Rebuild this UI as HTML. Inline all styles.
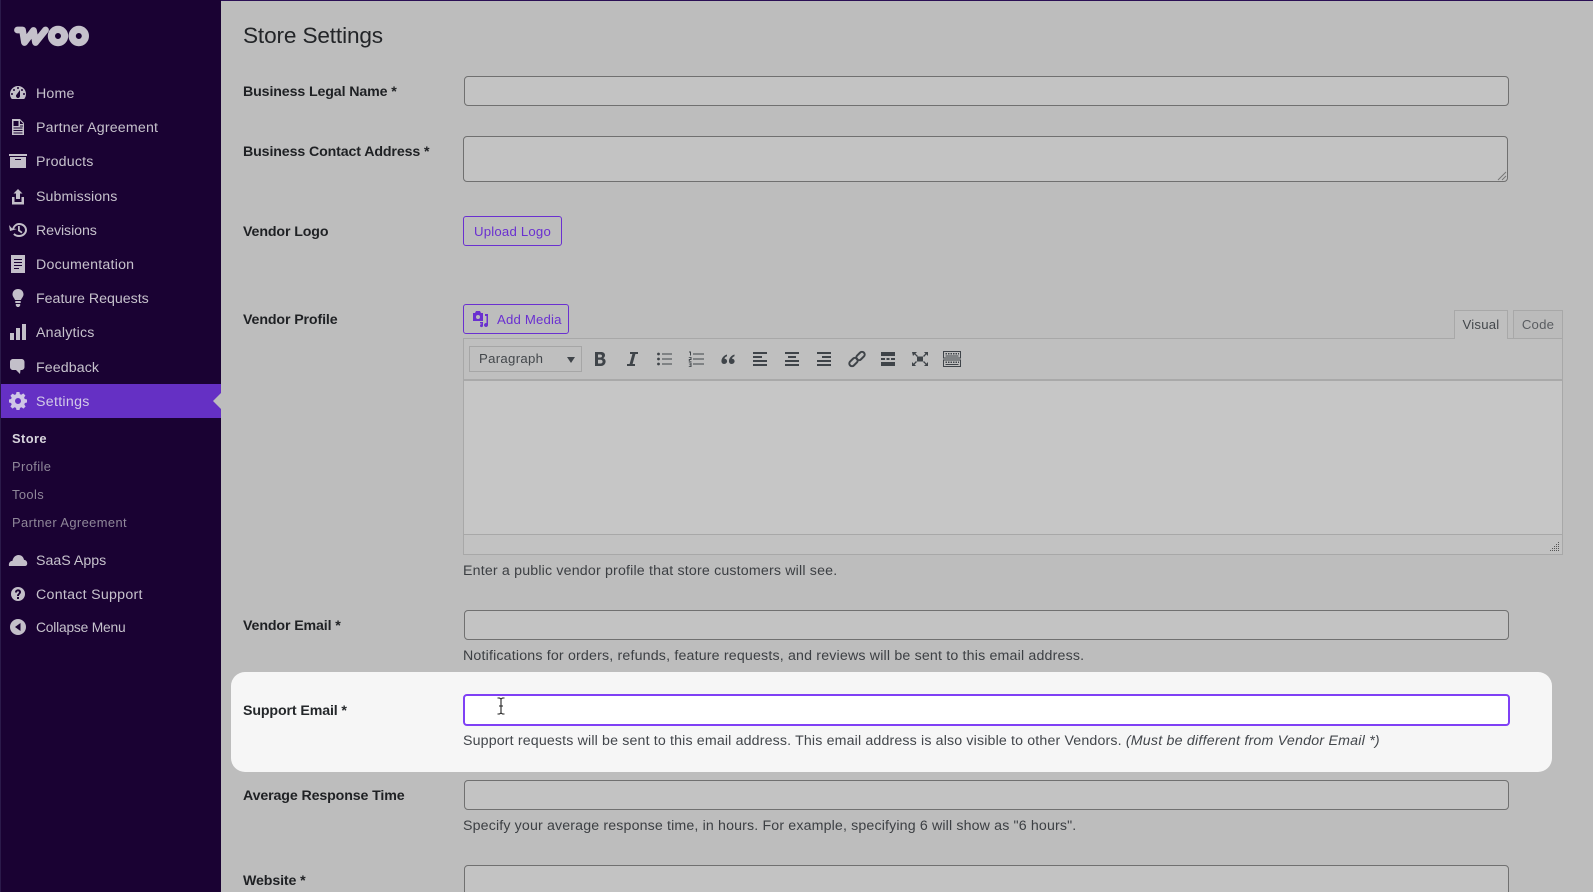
<!DOCTYPE html>
<html lang="en"><head><meta charset="utf-8"><title>Store Settings</title>
<style>
html,body{margin:0;padding:0;width:1593px;height:892px;overflow:hidden;background:#bdbdbd;font-family:"Liberation Sans",Arial,sans-serif}
#root{position:relative;width:1593px;height:892px;overflow:hidden;background:#bdbdbd}
.a{position:absolute;box-sizing:border-box}
.t{position:absolute;white-space:nowrap;line-height:20px;height:20px;margin-top:1px}
#side{left:0;top:0;width:221px;height:892px;background:#1a0233;border-left:1px solid #2b1a4a}
#top{left:221px;top:0;width:1372px;height:1px;background:#2a0f55}
.m{color:#c6c2cc;font-size:14.2px;left:36px}
.s{color:#8f8799;font-size:12.9px;letter-spacing:.4px;left:12px}
.ic{position:absolute;left:8px;width:20px;height:20px;fill:#c3bfc9;fill-rule:evenodd}
.l{color:#1f2124;font-weight:700;font-size:14.2px;letter-spacing:-.12px;left:243px}
.h{color:#3c3f43;font-size:14.2px;letter-spacing:.18px;left:463px}
.i{left:464px;width:1045px;height:30px;background:#c3c3c3;border:1px solid #707070;border-radius:4px}
.b{color:#6a30d0;font-size:13.2px;border:1px solid #6a30d0;border-radius:3px;background:#bdbdbd}
.tb{position:absolute;top:349px;width:20px;height:20px;fill:#3f4449;fill-rule:evenodd}
</style></head><body><div id="root">
<div class="a" id="side"></div><div class="a" id="top"></div>

<svg class="a" style="left:0;top:0" width="100" height="60" viewBox="0 0 100 60"><title>woo</title>
<path d="M17.500 30H22.500L24.500 42.500L33.500 30.500L35.500 42.500L45.500 30" fill="none" stroke="#c5c1cb" stroke-width="6.800" stroke-linejoin="round" stroke-linecap="round"/>
<circle cx="58" cy="36" r="6.600" fill="none" stroke="#c5c1cb" stroke-width="7.200"/><circle cx="78.800" cy="36" r="6.600" fill="none" stroke="#c5c1cb" stroke-width="7.200"/></svg>

<svg class="ic" style="top:83px" viewBox="0 0 20 20"><path d="M3.760 16h12.480c1.100-1.370 1.760-3.110 1.760-5 0-4.420-3.580-8-8-8s-8 3.580-8 8c0 1.890.660 3.630 1.760 5zM10 4c.550 0 1 .450 1 1s-.450 1-1 1-1-.450-1-1 .450-1 1-1zM6 6c.550 0 1 .450 1 1s-.450 1-1 1-1-.450-1-1 .450-1 1-1zm8 0c.550 0 1 .450 1 1s-.450 1-1 1-1-.450-1-1 .450-1 1-1zm-5.370 5.550L12 7v6c0 1.100-.900 2-2 2s-2-.900-2-2c0-.570.240-1.080.630-1.450zM4 10c.550 0 1 .450 1 1s-.450 1-1 1-1-.450-1-1 .450-1 1-1zm12 0c.550 0 1 .450 1 1s-.450 1-1 1-1-.450-1-1 .450-1 1-1z"/></svg>
<div class="t m" style="top:83px;letter-spacing:.17px">Home</div>
<svg class="ic" style="top:117px" viewBox="0 0 20 20"><path d="M4 2h8l4 4v12H4zM5.500 4v5h5V4zM12 3.500V7h3.500zM5.500 10.500v1h9v-1zM5.500 13v1h9v-1zM5.500 15.500v1h9v-1zM12 8.500v1h3v-1z"/></svg>
<div class="t m" style="top:117px;letter-spacing:.18px">Partner Agreement</div>
<svg class="ic" style="top:151px" viewBox="0 0 20 20"><path d="M19 3v2H1V3h18zM2 6h16v11H2V6zm11 3V8H7v1h6z"/></svg>
<div class="t m" style="top:151px;letter-spacing:.2px">Products</div>
<svg class="ic" style="top:186px" viewBox="0 0 20 20"><path d="M10 3l4.500 4.500H12V13H8V7.500H5.500zM4 11h2.500v5h7v-5H16v7.500H4z"/></svg>
<div class="t m" style="top:186px;letter-spacing:.09px">Submissions</div>
<svg class="ic" style="top:220px" viewBox="0 0 20 20"><path d="M1 5l3.200 3.600C5.400 5.400 8 3 11 3c4.400 0 8 3.100 8 7s-3.600 7-8 7c-2.300 0-4.400-.9-5.800-2.400l1.400-1.400C7.700 14.300 9.300 15 11 15c3.300 0 6-2.200 6-5s-2.700-5-6-5c-2.100 0-4 1.400-4.800 3.700L9 9l-7 2zM10 6h1.800v4l2.700 2-1 1.400L10 11z"/></svg>
<div class="t m" style="top:220px;letter-spacing:-.08px">Revisions</div>
<svg class="ic" style="top:254px" viewBox="0 0 20 20"><path d="M3 1h14v18H3zM6 5v1h8V5zM6 8v1h8V8zM6 11v1h8v-1zM6 14v1h5v-1z"/></svg>
<div class="t m" style="top:254px;letter-spacing:.22px">Documentation</div>
<svg class="ic" style="top:288px" viewBox="0 0 20 20"><path d="M10 1c3.200 0 5.500 2.300 5.500 5.300 0 2.400-1.700 3.600-2.500 5.700H7c-.8-2.100-2.500-3.300-2.500-5.700C4.500 3.300 6.800 1 10 1zM7.300 13h5.400v2H7.300zM7.800 16h4.400v1.500L11 19H9l-1.200-1.500z"/></svg>
<div class="t m" style="top:288px;letter-spacing:0">Feature Requests</div>
<svg class="ic" style="top:322px" viewBox="0 0 20 20"><path d="M2 11h4v7H2zM8 6h4v12H8zM14 2h4v16h-4z"/></svg>
<div class="t m" style="top:322px;letter-spacing:.2px">Analytics</div>
<svg class="ic" style="top:357px" viewBox="0 0 20 20"><path d="M5 2h8.500c1.700 0 3 1.300 3 3v5c0 1.700-1.300 3-3 3h-1l-.5 4L8 13H5c-1.700 0-3-1.300-3-3V5c0-1.700 1.300-3 3-3z"/></svg>
<div class="t m" style="top:357px;letter-spacing:.1px">Feedback</div>

<div class="a" style="left:1px;top:384px;width:220px;height:34px;background:#6530c4"></div>
<svg class="a" style="left:213px;top:393px" width="8" height="16"><path d="M8 0L0 8l8 8z" fill="#bdbdbd"/></svg>
<svg class="ic" style="top:391px;fill:#cfc6e6" viewBox="0 0 20 20"><path d="M18 11.500v-3l-2.300-.5-.6-1.500 1.300-2-2.100-2.100-2 1.300-1.500-.6L10.500 1h-3L7 3.300l-1.500.6-2-1.300-2.100 2.100 1.300 2L2.100 8 0 8.500v3l2.100.5.6 1.500-1.300 2 2.100 2.100 2-1.300 1.500.6.5 2.100h3l.5-2.100 1.500-.6 2 1.300 2.100-2.100-1.300-2 .6-1.500zM9 13a3 3 0 1 1 0-6 3 3 0 0 1 0 6z" transform="translate(1 0)"/></svg>
<div class="t m" style="top:391px;color:#d3cbe8;letter-spacing:.3px">Settings</div>

<div class="t s" style="top:428px;color:#d7d4dc;font-weight:700">Store</div>
<div class="t s" style="top:456px">Profile</div>
<div class="t s" style="top:484px">Tools</div>
<div class="t s" style="top:512px">Partner Agreement</div>

<svg class="ic" style="top:550px" viewBox="0 0 20 20"><path d="M1 16c-.6-3 1-5 3.500-5.300C5 7.500 7.500 5 10.500 5c3 0 5 2 5.500 4.700 2.300.3 3.500 2.300 3.200 4.300-.2 1.200-1 2-2.200 2z"/></svg>
<div class="t m" style="top:550px;letter-spacing:0">SaaS Apps</div>
<svg class="ic" style="top:584px" viewBox="0 0 20 20"><path d="M10 3a7 7 0 1 1 0 14 7 7 0 0 1 0-14zM9 13v2h2v-2zM7 8.500h2c0-.8.4-1.200 1-1.200s1 .4 1 1c0 1.200-2 1.400-2 3.700h2c0-1.800 2-2 2-4 0-1.600-1.300-2.600-3-2.600S7 6.500 7 8.500z"/></svg>
<div class="t m" style="top:584px;letter-spacing:.28px">Contact Support</div>
<svg class="ic" style="top:617px" viewBox="0 0 20 20"><path d="M10 2a8 8 0 1 1 0 16 8 8 0 0 1 0-16zM12.500 6L7 10l5.500 4z"/></svg>
<div class="t m" style="top:617px;font-size:13.8px;letter-spacing:-.2px">Collapse Menu</div>

<div class="t" style="left:243px;top:19.500px;height:30px;line-height:30px;font-size:22.6px;color:#232528;letter-spacing:-.14px">Store Settings</div>

<div class="t l" style="top:81px">Business Legal Name *</div>
<div class="a i" style="top:76px"></div>

<div class="t l" style="top:141px">Business Contact Address *</div>
<div class="a i" style="left:463px;top:136px;height:46px"></div>
<svg class="a" style="left:1497px;top:171px" width="10" height="10"><path d="M1 9L9 1M5 9l4-4" stroke="#777" stroke-width="1"/></svg>

<div class="t l" style="top:221px">Vendor Logo</div>
<div class="a b" style="left:463px;top:216px;width:99px;height:30px;line-height:29px;text-align:center;letter-spacing:.2px">Upload Logo</div>

<div class="t l" style="top:309px">Vendor Profile</div>
<div class="a b" style="left:463px;top:304px;width:106px;height:30px;line-height:29px;padding-left:33px;letter-spacing:.18px">Add Media</div>
<svg class="a" style="left:472px;top:310px;fill:#6a30d0" width="18" height="18" viewBox="0 0 18 18"><path d="M1 3h2l1-2h4l1 2h2v8H1zM6 5a2 2 0 1 0 0 4 2 2 0 0 0 0-4zM13 4h3v11a2 2 0 1 1-1.500-1.900V6H13zM8 12h3v3.500a1.500 1.500 0 1 1-1.500-1.400V13.500H8z" fill-rule="evenodd"/></svg>

<div class="a" style="left:1454px;top:310px;width:54px;height:29px;background:#bfbfbf;border:1px solid #a8a8a8;border-bottom:0;z-index:2;text-align:center;line-height:28px;font-size:13.2px;color:#43474b;letter-spacing:.2px">Visual</div>
<div class="a" style="left:1513px;top:310px;width:50px;height:28px;background:#bbbbbb;border:1px solid #a8a8a8;border-bottom:0;text-align:center;line-height:28px;font-size:13.2px;color:#5a5d61;letter-spacing:.2px">Code</div>

<div class="a" style="left:463px;top:338px;width:1100px;height:217px;background:#c6c6c6;border:1px solid #a8a8a8"></div>
<div class="a" style="left:464px;top:339px;width:1098px;height:42px;background:#bfbfbf;border-bottom:2px solid #a9a9a9"></div>
<div class="a" style="left:464px;top:534px;width:1098px;height:20px;background:#c2c2c2;border-top:1px solid #a8a8a8"></div>
<svg class="a" style="left:1549px;top:541px" width="11" height="11"><g fill="#555"><rect x="9" y="1" width="1" height="1"/><rect x="9" y="3" width="1" height="1"/><rect x="7" y="3" width="1" height="1"/><rect x="9" y="5" width="1" height="1"/><rect x="7" y="5" width="1" height="1"/><rect x="5" y="5" width="1" height="1"/><rect x="9" y="7" width="1" height="1"/><rect x="7" y="7" width="1" height="1"/><rect x="5" y="7" width="1" height="1"/><rect x="3" y="7" width="1" height="1"/><rect x="9" y="9" width="1" height="1"/><rect x="7" y="9" width="1" height="1"/><rect x="5" y="9" width="1" height="1"/><rect x="3" y="9" width="1" height="1"/><rect x="1" y="9" width="1" height="1"/></g></svg>

<div class="a" style="left:469px;top:346px;width:113px;height:26px;background:#bfbfbf;border:1px solid #a6a6a6;line-height:24px;padding-left:9px;font-size:13.2px;color:#43474b;letter-spacing:.3px">Paragraph</div>
<svg class="a" style="left:567px;top:357px" width="9" height="6"><path d="M0 0h8L4 6z" fill="#3f4449"/></svg>

<svg class="tb" style="left:590px" viewBox="0 0 20 20"><path d="M5 3h6c2.500 0 4 1.200 4 3.300 0 1.300-.7 2.400-1.800 2.900 1.500.5 2.400 1.600 2.400 3.200 0 2.400-1.800 4.600-4.600 4.600H5zM8 5.500v3h2.300c1 0 1.700-.6 1.700-1.500s-.7-1.500-1.700-1.500zM8 10.700v3.800h2.600c1.200 0 2-.8 2-1.900s-.8-1.900-2-1.900z"/></svg>
<svg class="tb" style="left:622px" viewBox="0 0 20 20"><path d="M8 3h8v2h-2.600l-2.800 10H13v2H5v-2h2.600l2.800-10H8z"/></svg>
<svg class="tb" style="left:654px" viewBox="0 0 20 20"><circle cx="4.500" cy="5" r="1.400"/><circle cx="4.500" cy="10" r="1.400"/><circle cx="4.500" cy="15" r="1.400"/><path d="M8 4.500h10v1H8zM8 9.500h10v1H8zM8 14.500h10v1H8z"/></svg>
<svg class="tb" style="left:686px" viewBox="0 0 20 20"><path d="M7 4.500h11v1H7zM7 9.500h11v1H7zM7 14.500h11v1H7zM3 2.500h2v4H4V3.500H3zM2.800 8h2.700v3H3.800v1h1.700v.6H2.800V10h1.700V8.700H2.800zM2.800 13.500h2.700v4.500H2.800v-.7h1.700v-1.200H3.200v-.6h1.300v-1.200H2.800z"/></svg>
<svg class="tb" style="left:718px" viewBox="0 0 20 20"><path d="M9 5.500C6 6.500 4 8.500 3.500 11.300c-.4 2.300.8 3.700 2.600 3.700s3-1.200 3-2.700-1.100-2.600-2.600-2.600c0-1 .9-2 2.500-2.500zM16.500 5.500c-3 1-5 3-5.500 5.800-.4 2.300.8 3.700 2.600 3.700s3-1.200 3-2.700-1.100-2.600-2.600-2.600c0-1 .9-2 2.500-2.500z"/></svg>
<svg class="tb" style="left:750px" viewBox="0 0 20 20"><path d="M3 3h14v2H3zM3 7h9v2H3zM3 11h14v2H3zM3 15h14v2H3z"/></svg>
<svg class="tb" style="left:782px" viewBox="0 0 20 20"><path d="M3 3h14v2H3zM6 7h8v2H6zM3 11h14v2H3zM3 15h14v2H3z"/></svg>
<svg class="tb" style="left:814px" viewBox="0 0 20 20"><path d="M3 3h14v2H3zM8 7h9v2H8zM3 11h14v2H3zM3 15h14v2H3z"/></svg>
<svg class="a" style="left:847px;top:349px" width="20" height="20" viewBox="0 0 20 20"><g fill="none" stroke="#3f4449" stroke-width="2"><rect x="1.700" y="10.300" width="9.600" height="5.400" rx="2.700" transform="rotate(-45 6.500 13)"/><rect x="8.700" y="4.300" width="9.600" height="5.400" rx="2.700" transform="rotate(-45 13.500 7)"/></g></svg>
<svg class="tb" style="left:878px" viewBox="0 0 20 20"><path d="M3 3h14v4H3zM3 9h4v2H3zM8.500 9h3v2h-3zM13 9h4v2h-4zM3 13h14v4H3z"/></svg>
<svg class="tb" style="left:910px" viewBox="0 0 20 20"><path d="M7 7.500h6v5H7zM2 3h5L5.400 4.600 8 7 7 8 4.600 5.400 3 7zM18 3v4l-1.600-1.600L14 8l-1-1 2.400-2.400L14 3zM2 17v-4l1.600 1.600L6 12l1 1-2.400 2.400L6 17zM18 17h-4l1.600-1.600L13 13l1-1 2.400 2.600L18 13z"/></svg>
<svg class="tb" style="left:942px;width:20px" viewBox="0 0 20 20"><path d="M1 2h18v7.500H1zM2 3v5.500h16V3zM1 10.500h18V18H1zM2 11.500V17h16v-5.500zM3.500 4h1.500v1.500H3.500zM6 4h1.500v1.500H6zM8.500 4H10v1.500H8.500zM11 4h1.500v1.500H11zM13.500 4H15v1.500h-1.500zM16 4h1v1.500h-1zM3.500 6.500h13v1h-13zM3.500 12.500h1.500V14H3.500zM6 12.500h1.500V14H6zM8.500 12.500H10V14H8.500zM11 12.500h1.500V14H11zM13.500 12.500H15V14h-1.500zM16 12.500h1V14h-1zM3.500 15h13v1h-13z"/></svg>

<div class="t h" style="top:560px">Enter a public vendor profile that store customers will see.</div>

<div class="t l" style="top:615px">Vendor Email *</div>
<div class="a i" style="top:610px"></div>
<div class="t h" style="top:645px">Notifications for orders, refunds, feature requests, and reviews will be sent to this email address.</div>

<div class="a" style="left:231px;top:672px;width:1321px;height:100px;background:#f6f6f6;border-radius:14px"></div>
<div class="t l" style="top:700px;color:#24272a">Support Email *</div>
<div class="a i" style="left:463px;top:694px;width:1047px;height:32px;background:#fff;border:2px solid #7f40f5"></div>
<svg class="a" style="left:495px;top:697px" width="12" height="18"><path d="M2.500 1h2l1.500 1 1.500-1h2M6 2v14M2.500 17h2l1.500-1 1.500 1h2M4 9h4" fill="none" stroke="#222" stroke-width="1.100"/></svg>
<div class="t h" style="top:730px;color:#42464b;letter-spacing:.155px">Support requests will be sent to this email address. This email address is also visible to other Vendors. <i style="letter-spacing:.22px">(Must be different from Vendor Email *)</i></div>

<div class="t l" style="top:785px">Average Response Time</div>
<div class="a i" style="top:780px"></div>
<div class="t h" style="top:815px;letter-spacing:.15px">Specify your average response time, in hours. For example, specifying 6 will show as "6 hours".</div>

<div class="t l" style="top:870px">Website *</div>
<div class="a i" style="top:865px;height:40px"></div>
</div></body></html>
